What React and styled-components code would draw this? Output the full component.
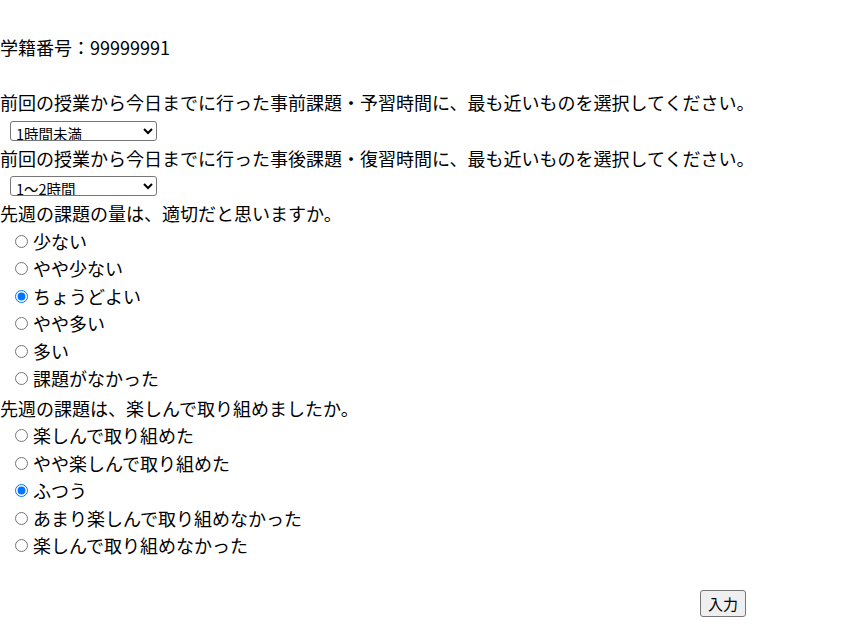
import React, { useState } from "react";
import styled, { createGlobalStyle } from "styled-components";

const GlobalStyle = createGlobalStyle`
    body {
        margin: 0;
        background: #fff;
        color: #000;
        font-family: "Noto Sans CJK JP", "Noto Sans", sans-serif;
    }
`;

const Page = styled.form`
    padding-top: 34px;
    font-size: 18px;
    line-height: 27.5px;
`;

const Line = styled.div`
    margin-top: ${(p) => p.$gap || 0}px;
`;

const SelectRow = styled.div`
    height: 28px;
    display: flex;
    align-items: center;
    padding-left: 10px;

    select {
        box-sizing: border-box;
        width: 147px;
        height: 20px;
        font-size: 14.5px;
        font-family: "Noto Sans CJK JP", sans-serif;
        padding: 0 1px;
        border: 1px solid #767676;
        border-radius: 3px;
        background: #fff;
        color: #000;
    }
`;

const RadioRow = styled.label`
    display: flex;
    align-items: center;
    height: 27.5px;
    padding-left: 10px;

    input {
        width: 13px;
        height: 13px;
        margin: 0 5px 0 5px;
    }
`;

const Footer = styled.div`
    width: 746px;
    display: flex;
    justify-content: flex-end;
    margin-top: 30px;

    button {
        font-family: "Noto Sans CJK JP", sans-serif;
        font-size: 15px;
        height: 27px;
        width: 46px;
        padding: 0;
        border: 1px solid #767676;
        border-radius: 3px;
        background: #efefef;
        color: #000;
    }
`;

const q3 = ["少ない", "やや少ない", "ちょうどよい", "やや多い", "多い", "課題がなかった"];
const q4 = ["楽しんで取り組めた", "やや楽しんで取り組めた", "ふつう", "あまり楽しんで取り組めなかった", "楽しんで取り組めなかった"];

export default function App() {
    const [amount, setAmount] = useState("ちょうどよい");
    const [fun, setFun] = useState("ふつう");

    return (
        <>
            <GlobalStyle />
            <Page onSubmit={(e) => e.preventDefault()}>
                <Line>学籍番号：99999991</Line>
                <Line $gap={27.5}>前回の授業から今日までに行った事前課題・予習時間に、最も近いものを選択してください。</Line>
                <SelectRow>
                    <select defaultValue="1時間未満">
                        <option>1時間未満</option>
                        <option>1～2時間</option>
                        <option>2～3時間</option>
                        <option>3時間以上</option>
                    </select>
                </SelectRow>
                <Line>前回の授業から今日までに行った事後課題・復習時間に、最も近いものを選択してください。</Line>
                <SelectRow>
                    <select defaultValue="1～2時間">
                        <option>1時間未満</option>
                        <option>1～2時間</option>
                        <option>2～3時間</option>
                        <option>3時間以上</option>
                    </select>
                </SelectRow>
                <Line>先週の課題の量は、適切だと思いますか。</Line>
                {q3.map((v) => (
                    <RadioRow key={v}>
                        <input type="radio" name="amount" checked={amount === v} onChange={() => setAmount(v)} />
                        {v}
                    </RadioRow>
                ))}
                <Line $gap={2}>先週の課題は、楽しんで取り組めましたか。</Line>
                {q4.map((v) => (
                    <RadioRow key={v}>
                        <input type="radio" name="fun" checked={fun === v} onChange={() => setFun(v)} />
                        {v}
                    </RadioRow>
                ))}
                <Footer>
                    <button type="submit">入力</button>
                </Footer>
            </Page>
        </>
    );
}
